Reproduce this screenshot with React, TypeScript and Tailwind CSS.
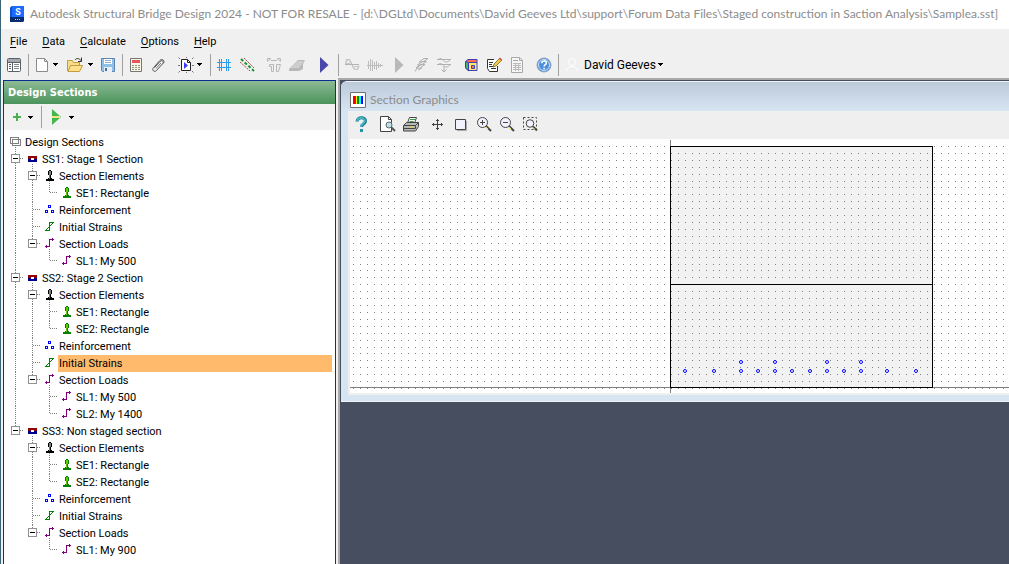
import { useState, type ReactNode } from "react";
import clsx from "clsx";

type IconName = "root" | "section" | "elements" | "element" | "rebar" | "strain" | "load";

type Node = {
  label: string;
  icon: IconName;
  children?: Node[];
};

const elements = (n: number): Node => ({
  label: "Section Elements",
  icon: "elements",
  children: Array.from({ length: n }, (_, i) => ({ label: `SE${i + 1}: Rectangle`, icon: "element" })),
});

const loads = (...moments: number[]): Node => ({
  label: "Section Loads",
  icon: "load",
  children: moments.map((m, i) => ({ label: `SL${i + 1}: My ${m}`, icon: "load" })),
});

const REBAR: Node = { label: "Reinforcement", icon: "rebar" };
const STRAINS: Node = { label: "Initial Strains", icon: "strain" };

const TREE: Node = {
  label: "Design Sections",
  icon: "root",
  children: [
    { label: "SS1: Stage 1 Section", icon: "section", children: [elements(1), REBAR, STRAINS, loads(500)] },
    { label: "SS2: Stage 2 Section", icon: "section", children: [elements(2), REBAR, STRAINS, loads(500, 1400)] },
    { label: "SS3: Non staged section", icon: "section", children: [elements(2), REBAR, STRAINS, loads(900)] },
  ],
};

function Svg({ w = 16, h = 16, children }: { w?: number; h?: number; children: ReactNode }) {
  return (
    <svg width={w} height={h} viewBox={`0 0 ${w} ${h}`} fill="none" className="shrink-0" aria-hidden="true">
      {children}
    </svg>
  );
}

/* ---------- tree ---------- */

function TreeIcon({ name, open }: { name: IconName; open: boolean }) {
  return (
    <svg width="17" height="17" shapeRendering="crispEdges" fill="none" className="shrink-0" aria-hidden="true">
      {open && <path d="M8.5 13v4" stroke="#808080" strokeDasharray="1 1" />}
      {name === "root" && (
        <>
          <path d="M3.500 9.500v-6h8v6z" stroke="#808080" />
          <path d="M5.500 11.500v-6h8v6z" stroke="#808080" />
        </>
      )}
      {name === "section" && (
        <>
          <path d="M4 5h9v3H4z" fill="#900000" />
          <path d="M4 8h9v3H4z" fill="#000090" />
          <path d="M7 7h3v2H7z" fill="#fff" />
        </>
      )}
      {(name === "elements" || name === "element") && (
        <>
          <path
            d="M8 2h2v1h1v4h-1v3h1v1h2v2H5v-2h2v-1h1V7H7V3h1z"
            fill={name === "element" ? "#008000" : "#000"}
          />
          <path d="M8 3h2v4H9v4H8z" fill={name === "element" ? "#66c800" : "#808080"} />
        </>
      )}
      {name === "rebar" && (
        <path d="M7.500 3.500h2v2h-2zM4.500 8.500h2v2h-2zM10.500 8.500h2v2h-2z" stroke="#0000ff" />
      )}
      {name === "strain" && (
        <path
          d="M8 3h5v1h-1v1h-1v1h-1v1H9v5H4v-1h1v-1h1V9h1V8h1zM9 4v2h1V5h1V4zM8 9H7v1H6v1h2z"
          fill="#008000"
          fillRule="evenodd"
        />
      )}
      {name === "load" && (
        <path d="M4 10h1V9h1v1h2V3h3V2h1v1h1v1h-1v1h-1V4H9v7H6v1H5v-1H4z" fill="#800080" />
      )}
    </svg>
  );
}

type Guide = "line" | "blank" | "tee" | "elbow";

function GuideCell({ kind }: { kind: Guide }) {
  return (
    <svg width="17" height="17" shapeRendering="crispEdges" className="shrink-0" aria-hidden="true">
      {kind !== "blank" && (
        <path d={kind === "elbow" ? "M8.500 0v8" : "M8.500 0v17"} stroke="#808080" strokeDasharray="1 1" />
      )}
      {(kind === "tee" || kind === "elbow") && <path d="M9 7.500h8" stroke="#808080" strokeDasharray="1 1" />}
    </svg>
  );
}

type RowProps = {
  node: Node;
  id: string;
  guides: Guide[];
  last?: boolean;
  root?: boolean;
  selected: string;
  onSelect: (id: string) => void;
};

function TreeRow({ node, id, guides, last, root, selected, onSelect }: RowProps) {
  const [open, setOpen] = useState(true);
  const kids = node.children ?? [];
  const isSelected = selected === id;

  return (
    <li role="treeitem" aria-selected={isSelected} aria-expanded={kids.length ? open : undefined}>
      <div className="flex h-[17px]">
        {guides.map((g, i) => (
          <GuideCell key={i} kind={g} />
        ))}
        {!root && (
          <span className="relative flex shrink-0">
            <GuideCell kind={last ? "elbow" : "tee"} />
            {kids.length > 0 && (
              <button
                aria-label={`Toggle ${node.label}`}
                onClick={() => setOpen(!open)}
                className="absolute top-[3px] left-1 flex size-[9px] items-center justify-center border border-[#919191] bg-white"
              >
                <span className={clsx("w-[5px] bg-black", open ? "h-px" : "h-[5px]")} />
              </button>
            )}
          </span>
        )}
        <TreeIcon name={node.icon} open={kids.length > 0 && open} />
        <button
          onClick={() => onSelect(id)}
          className={clsx("flex-1 pl-px text-left leading-[17px] whitespace-nowrap", isSelected && "bg-[#ffbb6b]")}
        >
          {node.label}
        </button>
      </div>
      {kids.length > 0 && open && (
        <ul role="group">
          {kids.map((kid, i) => (
            <TreeRow
              key={i}
              node={kid}
              id={`${id}.${i}`}
              guides={root ? [] : [...guides, last ? "blank" : "line"]}
              last={i === kids.length - 1}
              selected={selected}
              onSelect={onSelect}
            />
          ))}
        </ul>
      )}
    </li>
  );
}

/* ---------- toolbar pieces ---------- */

function Tool({ label, className, children }: { label: string; className?: string; children: ReactNode }) {
  return (
    <button
      aria-label={label}
      title={label}
      className={clsx("flex h-[22px] w-[22px] shrink-0 items-center justify-center hover:bg-[#d8e6f2]", className)}
    >
      {children}
    </button>
  );
}

function Drop({ label, className }: { label: string; className?: string }) {
  return (
    <button aria-label={label} className={clsx("flex h-[22px] w-[7px] shrink-0 items-center justify-center", className)}>
      <Caret />
    </button>
  );
}

function Caret() {
  return (
    <svg width="5" height="3" shapeRendering="crispEdges" aria-hidden="true">
      <path d="M0 0h5v1H0zM1 1h3v1H1zM2 2h1v1H2z" fill="#000" />
    </svg>
  );
}

function Sep({ className }: { className?: string }) {
  return <span className={clsx("h-[22px] w-px shrink-0 bg-[#a0a0a0]", className)} />;
}

function MainToolbar() {
  return (
    <div role="toolbar" aria-label="Main" className="flex h-[25px] items-center overflow-hidden pb-[2px] pl-[2px]">
      <Tool label="Navigator">
        <Svg>
          <rect x="1.500" y="1.500" width="13" height="13" rx="1" fill="#fff" stroke="#5a5f66" />
          <path d="M2 2h12v3H2z" fill="#a4a9b0" />
          <path d="M6.500 5v9M2 5.500h12" stroke="#5a5f66" />
          <path d="M3 7.500h2M3 9.500h2M3 11.500h2" stroke="#5a5f66" />
          <path d="M8 7.500h5M8 9.500h5M8 11.500h5" stroke="#808890" />
        </Svg>
      </Tool>
      <Sep className="ml-[3px]" />
      <Tool label="New" className="ml-[2px]">
        <Svg>
          <path d="M2.500 1.500h8l3 3v10h-11z" fill="#fff" stroke="#8a8a8a" />
          <path d="M10.500 1.500v3h3" stroke="#8a8a8a" />
        </Svg>
      </Tool>
      <Drop label="New from" className="-ml-px" />
      <Tool label="Open" className="ml-[5px]">
        <Svg>
          <path d="M.5 14V3.500h5l1 2h6v3" fill="#f7dc8c" stroke="#c79b3a" />
          <path d="M1 14.500 3.500 8.500h12l-3 6z" fill="#ffe08a" stroke="#c79b3a" />
          <path d="M8 3c2-2.500 4-1.500 6 .5M14.500.5v4H11" stroke="#333" />
        </Svg>
      </Tool>
      <Drop label="Recent files" className="ml-px" />
      <Tool label="Save" className="ml-[3px]">
        <Svg>
          <path d="M1.500 1.500h13v13h-12l-1-1z" fill="#8fc0e8" stroke="#5c86ae" />
          <path d="M4 2h8v5H4z" fill="#fff" />
          <path d="M5 3.500h6M5 5.500h6" stroke="#9ab" />
          <path d="M4 10h8v5H4z" fill="#e8eef4" />
          <path d="M5 11h2v3H5z" fill="#44719c" />
        </Svg>
      </Tool>
      <Sep className="ml-[3px]" />
      <Tool label="Calculator" className="ml-[2px]">
        <Svg>
          <path d="M2.500 1.500h11v13h-11z" fill="#fbf4e4" stroke="#777" />
          <path d="M4 3h8v3H4z" fill="#e4575b" />
          <path d="M4 8.500h8M4 10.500h8M4 12.500h8" stroke="#8a9a82" strokeDasharray="2 1" />
        </Svg>
      </Tool>
      <Tool label="Attachments">
        <Svg>
          <path
            d="M4.500 10.500 10 4.500c2-2 4.500.2 2.700 2.200l-6.400 7c-2 1.800-4.800-.6-3-2.700L9.800 3.500c2.500-2.600 5.600.5 3.400 3"
            stroke="#555"
          />
          <path d="M6 11.500 11 6" stroke="#777" />
        </Svg>
      </Tool>
      <Tool label="Run report" className="ml-[6px]">
        <Svg>
          <path d="M3.500 2.500h6l3 3v8h-9z" fill="#fff" stroke="#222" />
          <path d="M9.500 2.500v3h3" stroke="#222" />
          <path d="M6 5l4 3.500L6 12z" fill="#3b3bff" />
          <path
            d="M.5.5 2 2M15.500.5 14 2M.5 15.500 2 14M15.500 15.500 14 14M0 8.500h2M14 8.500h2M8.500 0v1M8.500 15v1"
            stroke="#777"
          />
        </Svg>
      </Tool>
      <Drop label="Report options" className="-ml-px" />
      <Sep className="ml-[7px]" />
      <Tool label="Grid members" className="ml-[2px]">
        <Svg>
          <path
            d="M1 5.500h14M1 10.500h14M3.500 2v12M5.500 2v12M10.500 2v12M12.500 2v12"
            stroke="#2f9be8"
            shapeRendering="crispEdges"
          />
        </Svg>
      </Tool>
      <Tool label="Alignment" className="ml-px">
        <Svg>
          <path d="M1 5l10 9M5 1l10 10" stroke="#a04848" strokeDasharray="2 1" />
          <path d="M2 2l13 12" stroke="#1e9130" strokeWidth="2" strokeDasharray="3 2" />
        </Svg>
      </Tool>
      <Tool label="Section shape" className="ml-[5px]">
        <Svg>
          <path d="M1.500 4.500v-3h3M14.500 4.500v-3h-3M2 4l3-2.500M14 4l-3-2.500M5 3.500h6" stroke="#b8b8b8" />
          <path d="M3.500 7.500h4v7h-2v-5h-2zM10.500 14.500v-7h4l-2 7z" stroke="#b8b8b8" />
        </Svg>
      </Tool>
      <Tool label="Beam" className="ml-px">
        <Svg>
          <path d="M0 12l9-9h7l-2 4v5l-4 2H0z" fill="#b8b8b8" />
          <path d="M1 11l8-7h6l-5 7z" fill="#cecece" />
        </Svg>
      </Tool>
      <Tool label="Analyse" className="ml-[5px]">
        <Svg>
          <path d="M4 0l8.500 8L4 16z" fill="#4848ac" />
        </Svg>
      </Tool>
      <Sep className="ml-[3px]" />
      <Tool label="Influence surface" className="ml-[2px]">
        <Svg>
          <path d="M1 7.500h14M1.500 7.500c1-6 5-6 6.500 0s5.500 7 7 1" stroke="#b4b4b4" />
          <path d="M2 2.500h4v4H2zM10 9.500h4v3h-4z" stroke="#c8c8c8" />
        </Svg>
      </Tool>
      <Tool label="Vibration" className="ml-px">
        <Svg>
          <path
            d="M0 8.500h16M1.500 4v8M3.500 2v12M5.500 3v11M7.500 5v7M9.500 4v9M11.500 6v5M13.500 7v3"
            stroke="#bcbcbc"
            shapeRendering="crispEdges"
          />
        </Svg>
      </Tool>
      <Tool label="Run" className="ml-[2px]">
        <Svg>
          <path d="M4 0l8.500 8L4 16z" fill="#b8b8b8" />
        </Svg>
      </Tool>
      <Tool label="Load case">
        <Svg>
          <path d="M6 5l5-3.500h4L10 5zM4.500 8l5-3.500h4l-5 3.500zM3 11l5-3.500h4L7 11zM6 8l-4 6.500M9 11l-4 2" stroke="#b0b0b0" />
        </Svg>
      </Tool>
      <Tool label="Envelope" className="ml-px">
        <Svg>
          <path
            d="M1 2.500h14M1 7.500h14M2 3c2-3 4-1 6 1s4 1 6-1M2 8c2-3 4-1 6 1s4 1 6-1M8 9v6M5.500 12.500 8 15l2.500-2.500"
            stroke="#b0b0b0"
          />
        </Svg>
      </Tool>
      <Tool label="3D view" className="ml-[5px]">
        <Svg>
          <path d="M2.500 4.500 5 2.500h9.500l-1 3h-8z" fill="#ff6a50" />
          <path d="M2.500 4.500v7l3 3v-9z" fill="#49b56a" />
          <path d="M5.500 5.500h8v8h-8z" fill="#ffe96a" />
          <path
            d="M2.500 4.500 5 2.500h9v11h-8.500l-3-2.500zM5.500 14V5.500H14M2.500 4.500l3 1M8.500 8.500h3v3h-3z"
            stroke="#4040b4"
          />
          <path d="M9 9h2v2H9z" fill="#ff7060" />
        </Svg>
      </Tool>
      <Tool label="Edit notes" className="ml-px">
        <Svg>
          <path d="M1.500 2.500h10v12h-8l-2-2z" fill="#fff" />
          <path d="M8 2.500H1.500v9l2 3h8V9M3 5.500h4M3 7.500h3M3 9.500h4M5 11.500h5" stroke="#333" />
          <path d="M7 10l1-3 6-6 2 2-6 6z" fill="#f3c944" stroke="#665522" strokeWidth=".7" />
          <path d="M13 2l1-1.500L15.500 2 14.500 3z" fill="#e04050" />
        </Svg>
      </Tool>
      <Tool label="Results table" className="ml-px">
        <Svg>
          <path d="M2.500.5h8l3 3v12h-11z" fill="#f6f6f6" stroke="#a8a8a8" />
          <path d="M10.500.5v3h3M4 3.500h5" stroke="#a8a8a8" />
          <path d="M4 6.500h8M4 8.500h8M4 10.500h8M4 12.500h8M6.500 6v8M9.500 6v8" stroke="#bababa" />
        </Svg>
      </Tool>
      <Tool label="Help" className="ml-[5px]">
        <Svg>
          <circle cx="8" cy="8" r="7" fill="#4b8fdd" stroke="#8ea4bd" />
          <circle cx="8" cy="8" r="5.500" stroke="#cfe2f8" />
          <path d="M5.800 6.200c0-3 4.600-3 4.600-.2 0 1.700-2.300 1.700-2.300 3.500" stroke="#fff" strokeWidth="1.600" />
          <path d="M7.300 10.800h1.600v1.500H7.300z" fill="#fff" />
        </Svg>
      </Tool>
      <Sep className="ml-[3px]" />
      <button className="ml-[5px] flex h-[22px] items-center text-[12px] whitespace-nowrap">
        <Svg>
          <circle cx="8" cy="5" r="3.500" stroke="#fff" />
          <path d="M2.500 14c0-6 11-6 11 0" stroke="#fff" />
        </Svg>
        <span className="mr-[2px] ml-1">David Geeves</span>
        <Caret />
      </button>
    </div>
  );
}

function GraphicsToolbar() {
  return (
    <div role="toolbar" aria-label="Section graphics" className="flex h-7 items-center overflow-hidden pb-[3px] pl-[2px]">
      <Tool label="Help">
        <Svg>
          <path d="M4 5.500C4 .5 13 .7 12.500 5.500 12.300 8 8.500 8 8.500 11" stroke="#1d7488" strokeWidth="3" />
          <path d="M4 5C4.500 1 12 1 11.800 5 11.600 7.500 8 7.500 8 11" stroke="#41b4c4" strokeWidth="2" />
          <path d="M7 13h3v3H7z" fill="#2a93a6" />
        </Svg>
      </Tool>
      <Tool label="Print preview" className="ml-1">
        <Svg w={18}>
          <path d="M2.500.5h8l3 3v12h-11z" fill="#fff" stroke="#444" />
          <path d="M10.500.5v3h3" stroke="#444" />
          <circle cx="11" cy="9" r="3" fill="#b7e3e6" stroke="#666" />
          <path d="M13.500 11.500 17 15" stroke="#555" strokeWidth="2" />
        </Svg>
      </Tool>
      <Tool label="Print" className="ml-[2px]">
        <Svg>
          <path d="M4.500 7l2-5.500h7l-2 5.500z" fill="#fff" stroke="#444" />
          <path d="M7 3.500h5M6.500 5.500h4" stroke="#3a9a4a" />
          <path d="M.5 9.500l3-3h12v4l-3 4.500H.5z" fill="#b8b8b8" stroke="#444" />
          <path d="M1 9.500h11.500l3-3M1 12.500h11.500v-3" stroke="#444" />
          <path d="M7 11h3" stroke="#f0e040" />
        </Svg>
      </Tool>
      <Tool label="Pan" className="ml-1">
        <Svg>
          <path
            d="M8 3h1v1h1v1H9v3h3V7h1v1h1v1h-1v1h-1V9H9v3h1v1H9v1H8v-1H7v-1h1V9H5v1H4V9H3V8h1V7h1v1h3V5H7V4h1z"
            fill="#404040"
            shapeRendering="crispEdges"
          />
        </Svg>
      </Tool>
      <Tool label="Zoom extents" className="ml-px">
        <Svg>
          <path d="M3.500 3.500h10v10h-10z" fill="#f2f2ff" stroke="#444" />
          <path d="M14.500 5v9.500H5" stroke="#aaa" />
        </Svg>
      </Tool>
      <Tool label="Zoom in" className="ml-[2px]">
        <Svg>
          <circle cx="6.500" cy="6.500" r="5" fill="#f2f2ff" stroke="#444" />
          <path d="M4 6.500h5M6.500 4v5" stroke="#444" />
          <path d="M10 10l5 5" stroke="#444" strokeWidth="2" />
          <path d="M10 11l2 2" stroke="#f4e04a" />
        </Svg>
      </Tool>
      <Tool label="Zoom out" className="ml-px">
        <Svg>
          <circle cx="6.500" cy="6.500" r="5" fill="#f2f2ff" stroke="#444" />
          <path d="M4 6.500h5" stroke="#444" />
          <path d="M10 10l5 5" stroke="#444" strokeWidth="2" />
          <path d="M10 11l2 2" stroke="#f4e04a" />
        </Svg>
      </Tool>
      <Tool label="Zoom window" className="ml-px">
        <Svg>
          <path d="M1.500 1.500h13v12h-13z" stroke="#444" strokeDasharray="2 2" />
          <circle cx="8" cy="7.500" r="3.800" fill="#f2f2ff" stroke="#444" />
          <path d="M11 10.500l4 4" stroke="#444" strokeWidth="2" />
          <path d="M11 11.500l1.500 1.500" stroke="#f4e04a" />
        </Svg>
      </Tool>
    </div>
  );
}

/* ---------- section drawing ---------- */

// grid pitch is not a whole number of pixels, so each dot is rounded on its own
const GRID = 6.914;
const BARS = [
  [335, 232], [364, 232], [391, 232], [408, 232], [425, 232], [442, 232],
  [460, 232], [477, 232], [494, 232], [511, 232], [537, 232], [566, 232],
  [391, 223], [425, 223], [477, 223], [511, 223],
];

function gridPath(cols: number, rows: number) {
  let d = "";
  for (let r = 0; r < rows; r++) {
    for (let c = 0; c < cols; c++) {
      d += `M${3 + Math.round(c * GRID)} ${7 + Math.round(r * GRID)}h1v1h-1z`;
    }
  }
  return d;
}

function SectionDrawing() {
  return (
    <svg className="block h-[254px] w-full bg-white" role="img" aria-label="Section drawing">
      <g shapeRendering="crispEdges" fill="none">
        <path d="M320 7h263v241H320z" fill="#f2f2f2" />
        <path d={gridPath(240, 36)} fill="#808080" />
        <path d="M320.500 1v253" stroke="#808080" />
        <rect x="0" y="248" width="100%" height="1" fill="#808080" />
        <path d="M320.500 7.500h262v241h-262zM320 145.500h263" stroke="#000" />
      </g>
      {BARS.map(([x, y]) => (
        <circle key={`${x}-${y}`} cx={x} cy={y} r="1.500" fill="#fff" stroke="#0000ff" />
      ))}
    </svg>
  );
}

const MENU = ["File", "Data", "Calculate", "Options", "Help"];

export default function App() {
  const [selected, setSelected] = useState("0.1.2");

  return (
    <div className="flex min-h-screen flex-col overflow-hidden border-l border-[#3b6475] bg-[#f0f0f0] font-[Roboto,sans-serif] text-[11px] text-black">
      <header className="flex h-[29px] items-center bg-white pb-px pl-[9px]">
        <svg width="14" height="17" viewBox="0 0 14 17" className="shrink-0" aria-hidden="true">
          <path d="M0 2 2 0h12v14l-2 2H0z" fill="#0a3a9c" />
          <path d="M2 0h12v11H2z" fill="#1a6bff" />
          <path d="M0 2l2-2v11H0z" fill="#0f50d0" />
          <path d="M0 11h14v4l-1 1H0z" fill="#082b6e" />
          <text x="8" y="9" textAnchor="middle" fontSize="9" fontWeight="700" fill="#fff">S</text>
          <path d="M5 13.500h6" stroke="#c0d0f0" strokeDasharray="1 1" />
        </svg>
        <h1 className="ml-[6px] font-[Lato,sans-serif] text-[12px] whitespace-nowrap text-[#8c8c8c]">
          Autodesk Structural Bridge Design 2024 - NOT FOR RESALE - [d:\DGLtd\Documents\David Geeves
          Ltd\support\Forum Data Files\Staged construction in Saction Analysis\Samplea.sst]
        </h1>
      </header>

      <nav aria-label="Menu" className="flex h-6 items-center gap-[15px] pt-[2px] pl-[9px]">
        {MENU.map((m) => (
          <button key={m} className="hover:bg-[#d8e6f2]">
            <span className="underline underline-offset-2">{m[0]}</span>
            {m.slice(1)}
          </button>
        ))}
      </nav>

      <MainToolbar />

      <main className="flex flex-1">
        <div className="flex shrink-0 px-[2px] pt-[2px]">
          <aside className="flex w-[333px] flex-col border border-b-0 border-[#0a2f8f] bg-white">
            <h2 className="flex h-[23px] items-center bg-gradient-to-b from-[#8dba95] to-[#4a935c] pt-px pl-1 font-['DejaVu_Sans_Condensed','DejaVu_Sans',sans-serif] text-[11px] font-bold text-white">
              Design Sections
            </h2>
            <div role="toolbar" aria-label="Design sections" className="flex h-[26px] items-center bg-[#f1f1f1] pl-[2px]">
              <Tool label="Add">
                <svg width="8" height="8" shapeRendering="crispEdges" aria-hidden="true">
                  <path d="M3 0h2v3h3v2H5v3H3V5H0V3h3z" fill="#4caf50" />
                </svg>
              </Tool>
              <Drop label="Add options" className="-ml-px" />
              <Sep className="ml-[7px]" />
              <Tool label="Analyse" className="ml-[3px]">
                <Svg>
                  <path d="M4 0l9 8-9 8z" fill="#45b649" />
                  <path d="M4 7h8v2H4z" fill="#f2e68a" />
                </Svg>
              </Tool>
              <Drop label="Analyse options" className="ml-px" />
            </div>
            <ul role="tree" aria-label="Design Sections" className="px-[3px] pt-1">
              <TreeRow node={TREE} id="0" guides={[]} root selected={selected} onSelect={setSelected} />
            </ul>
          </aside>
        </div>

        <div className="flex min-w-0 flex-1 flex-col border-t-2 border-l-2 border-[#a9a9a9] bg-[#474e5f]">
          <section
            aria-label="Section Graphics"
            className="mt-px ml-px overflow-hidden rounded-tl-md border-y border-[#f0f4f8] bg-[#d7e4f2] pb-[6px] pl-[7px]"
          >
            <div className="-ml-[7px] flex h-[29px] items-center bg-gradient-to-b from-[#bdcad9] to-[#d7e4f2] pt-[6px] pl-[9px]">
              <Svg>
                <path d="M.5.5h15v15H.5z" fill="#fff" stroke="#707070" />
                <path d="M3 4h3v8H3z" fill="#f00" />
                <path d="M6 4h1v8H6z" fill="#ff0" />
                <path d="M7 4h2v8H7z" fill="#080" />
                <path d="M9 4h2v8H9z" fill="#0ff" />
                <path d="M11 4h2v8h-2z" fill="#00f" />
              </Svg>
              <h2 className="ml-1 font-[Lato,sans-serif] text-[12px] text-[#8c8c8c]">Section Graphics</h2>
            </div>
            <div className="bg-[#efefef] pb-[2px]">
              <GraphicsToolbar />
              <div className="pl-[2px]">
                <SectionDrawing />
              </div>
            </div>
          </section>
        </div>
      </main>
    </div>
  );
}
